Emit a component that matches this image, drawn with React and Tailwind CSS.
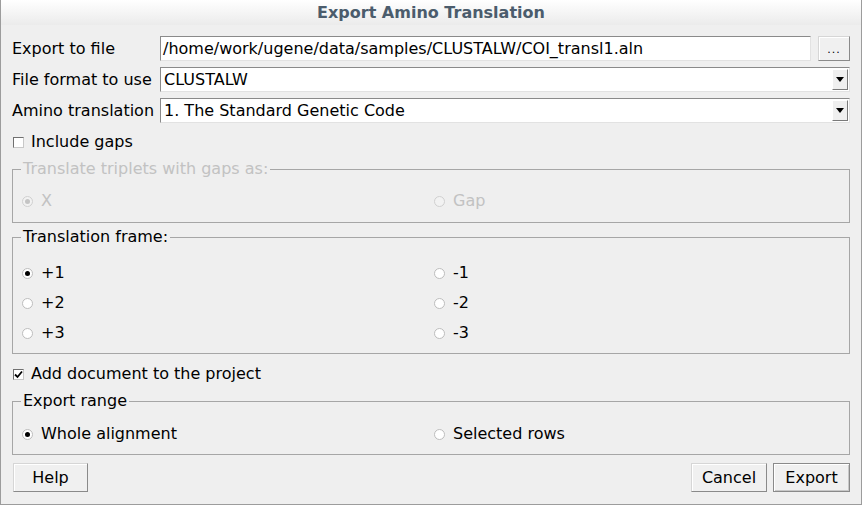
import React from 'react';

const font = { fontFamily: '"DejaVu Sans", "Liberation Sans", sans-serif' };

function Radio({ checked, disabled, label }) {
  return (
    <div className="flex items-center h-[20px]">
      <span
        className={`w-[11px] h-[11px] rounded-full border flex items-center justify-center ${
          disabled ? 'border-[#d0d0d0] bg-[#f2f2f2]' : 'border-[#bdbdbd] bg-white'
        }`}
      >
        {checked && (
          <span className={`w-[5px] h-[5px] rounded-full ${disabled ? 'bg-[#c4c4c4]' : 'bg-black'}`} />
        )}
      </span>
      <span className={`ml-[8px] ${disabled ? 'text-[#c2c2c2]' : 'text-black'}`}>{label}</span>
    </div>
  );
}

function Checkbox({ checked, label }) {
  return (
    <div className="flex items-center h-[20px] pl-[1px]">
      <span className="w-[11px] h-[11px] bg-white border border-t-[#707070] border-l-[#707070] border-b-[#c8c8c8] border-r-[#c8c8c8] flex items-center justify-center">
        {checked && (
          <svg width="9" height="9" viewBox="0 0 9 9">
            <path d="M1 4.5 L3.5 7 L8 1.5" fill="none" stroke="black" strokeWidth="1.8" />
          </svg>
        )}
      </span>
      <span className="ml-[7px]">{label}</span>
    </div>
  );
}

function Group({ title, disabled, className, children }) {
  return (
    <fieldset className={`border border-[#a6a6a6] px-[9px] ${className}`}>
      <legend
        className={`ml-[-1px] px-[2px] leading-[18px] ${disabled ? 'text-[#c2c2c2]' : 'text-black'}`}
      >
        {title}
      </legend>
      {children}
    </fieldset>
  );
}

function Combo({ value }) {
  return (
    <div className="flex-1 h-[25px] bg-white border border-t-[#8a8a8a] border-l-[#8a8a8a] border-b-[#e2e2e2] border-r-[#e2e2e2] flex items-center pl-[3px] pr-[1px]">
      <span className="flex-1">{value}</span>
      <span className="w-[16px] h-[21px] bg-[#efefef] border border-t-white border-l-white border-b-[#7a7a7a] border-r-[#7a7a7a] flex items-center justify-center">
        <svg width="8" height="5" viewBox="0 0 8 5">
          <path d="M0 0 L8 0 L4 5 Z" fill="black" />
        </svg>
      </span>
    </div>
  );
}

function Button({ children, primary, className }) {
  return (
    <button
      className={`h-[29px] flex items-center justify-center bg-[#f0f0f0] border ${
        primary
          ? 'border-[#8a8a8a] shadow-[inset_1px_1px_0_#ffffff,inset_-1px_-1px_0_#c8c8c8]'
          : 'border-t-[#d6d6d6] border-l-[#d6d6d6] border-b-[#8a8a8a] border-r-[#8a8a8a] shadow-[inset_1px_1px_0_#ffffff]'
      } ${className}`}
    >
      {children}
    </button>
  );
}

export default function App() {
  return (
    <div
      className="w-[862px] h-[505px] bg-[#efefef] border-x border-b border-[#9c9c9c] flex flex-col text-[16px] text-black"
      style={font}
    >
      <div className="h-[25px] bg-gradient-to-b from-white to-[#ebebeb] flex items-center justify-center font-bold text-[#4b5c6c]">
        Export Amino Translation
      </div>

      <div className="flex flex-col px-[11px] pt-[11px]">
        <div className="flex items-center h-[25px]">
          <span className="w-[148px]">Export to file</span>
          <div className="flex-1 h-[25px] bg-white border border-t-[#8a8a8a] border-l-[#8a8a8a] border-b-[#e2e2e2] border-r-[#e2e2e2] flex items-center pl-[2px]">
            /home/work/ugene/data/samples/CLUSTALW/COI_transl1.aln
          </div>
          <Button className="ml-[7px] w-[32px] !h-[25px] text-[11px] tracking-[1px] pt-[4px]">...</Button>
        </div>

        <div className="flex items-center h-[25px] mt-[6px]">
          <span className="w-[148px]">File format to use</span>
          <Combo value="CLUSTALW" />
        </div>

        <div className="flex items-center h-[25px] mt-[6px]">
          <span className="w-[148px]">Amino translation</span>
          <Combo value="1. The Standard Genetic Code" />
        </div>

        <div className="mt-[9px]">
          <Checkbox label="Include gaps" />
        </div>

        <Group title="Translate triplets with gaps as:" disabled className="mt-[8px] h-[63px]">
          <div className="grid grid-cols-[412px_1fr] mt-[13px]">
            <Radio checked disabled label="X" />
            <Radio disabled label="Gap" />
          </div>
        </Group>

        <Group title="Translation frame:" className="mt-[5px] h-[126px]">
          <div className="grid grid-cols-[412px_1fr] mt-[17px] gap-y-[10px]">
            <Radio checked label="+1" />
            <Radio label="-1" />
            <Radio label="+2" />
            <Radio label="-2" />
            <Radio label="+3" />
            <Radio label="-3" />
          </div>
        </Group>

        <div className="mt-[10px]">
          <Checkbox checked label="Add document to the project" />
        </div>

        <Group title="Export range" className="mt-[8px] h-[63px]">
          <div className="grid grid-cols-[412px_1fr] mt-[14px]">
            <Radio checked label="Whole alignment" />
            <Radio label="Selected rows" />
          </div>
        </Group>

        <div className="flex items-center mt-[8px] pl-[1px]">
          <Button className="w-[75px]">Help</Button>
          <div className="flex-1" />
          <Button className="w-[76px]">Cancel</Button>
          <Button primary className="w-[77px] ml-[6px]">Export</Button>
        </div>
      </div>
    </div>
  );
}
